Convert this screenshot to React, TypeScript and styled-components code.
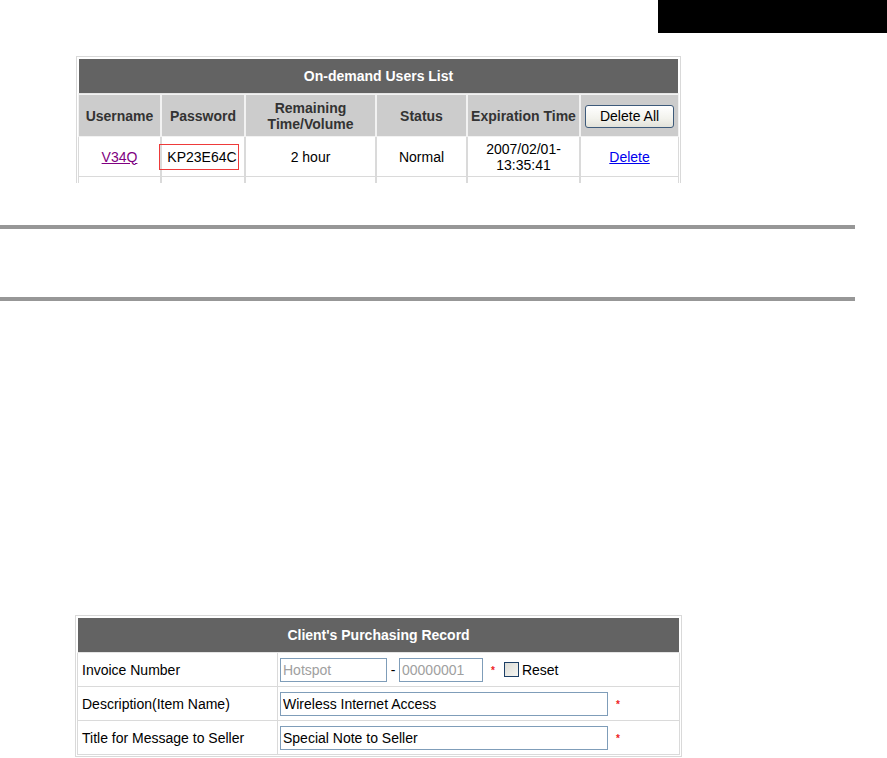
import React from "react";
import styled, { createGlobalStyle } from "styled-components";

const Global = createGlobalStyle`
  html, body { margin: 0; padding: 0; background: #fff; }
  body { font-family: "Liberation Sans", Arial, sans-serif; font-size: 14px; color: #000; }
`;

const Page = styled.div`
  width: 887px;
  height: 758px;
  display: flex;
  flex-direction: column;
  overflow: hidden;
`;

const TopBar = styled.div`
  height: 33px;
  display: flex;
  justify-content: flex-end;
`;

const BlackTab = styled.div`
  width: 229px;
  height: 33px;
  background: #000;
`;

const TableClip = styled.div<{ $top: number; $left: number; $height?: number }>`
  margin-top: ${(p) => p.$top}px;
  margin-left: ${(p) => p.$left}px;
  width: 605px;
  ${(p) => (p.$height ? `height: ${p.$height}px; overflow: hidden;` : "")}
`;

const Table = styled.table`
  width: 605px;
  table-layout: fixed;
  border-collapse: separate;
  border-spacing: 0;
  border: 1px solid #d9d9d9;
  padding: 1px;
  font-family: "Liberation Sans", Arial, sans-serif;
  font-size: 14px;
  box-sizing: border-box;
`;

const TitleCell = styled.th<{ $h: number }>`
  height: ${(p) => p.$h}px;
  background: #636363;
  color: #fff;
  font-weight: bold;
  text-align: center;
  border: 1px solid #fff;
  border-bottom-color: #e4e4e4;
  padding: 0;
`;

const HeadCell = styled.th`
  height: 41px;
  background: #cccccc;
  color: #333;
  font-weight: bold;
  line-height: 16px;
  text-align: center;
  border: 1px solid #f2f2f2;
  padding: 0 2px;
`;

const DataCell = styled.td<{ $h?: number }>`
  height: ${(p) => p.$h ?? 39}px;
  text-align: center;
  line-height: 16px;
  border: 1px solid #dadada;
  border-top: none;
  padding: 0;
  background: #fff;
`;

const UserLink = styled.a<{ $visited?: boolean }>`
  color: ${(p) => (p.$visited ? "#800080" : "#0000ee")};
  text-decoration: underline;
  cursor: pointer;
`;

const Highlight = styled.span`
  display: inline-block;
  border: 1px solid #ee3a3a;
  padding: 4px 1px 4px 7px;
  line-height: 16px;
  margin-left: -8px;
`;

const DeleteAllButton = styled.button`
  width: 89px;
  height: 23px;
  font-family: "Liberation Sans", Arial, sans-serif;
  font-size: 14px;
  color: #000;
  border: 1px solid #3d5a7a;
  border-radius: 3px;
  background: linear-gradient(#ffffff, #f2f2ec 60%, #e2e2da);
  padding: 0;
  margin-top: 1px;
`;

const Rule = styled.div<{ $top: number }>`
  margin-top: ${(p) => p.$top}px;
  width: 855px;
  height: 4px;
  background: #979797;
  flex-shrink: 0;
`;

const LabelCell = styled.td`
  height: 33px;
  padding: 0 0 0 4px;
  border: 1px solid #dadada;
  border-top: none;
  border-right: none;
  text-align: left;
  white-space: nowrap;
`;

const ValueCell = styled.td`
  height: 33px;
  padding: 0 0 0 2px;
  border: 1px solid #dadada;
  border-top: none;
  text-align: left;
`;

const FieldRow = styled.div`
  display: flex;
  align-items: center;
`;

const TextInput = styled.input<{ $w: number; $muted?: boolean }>`
  width: ${(p) => p.$w}px;
  height: 24px;
  box-sizing: border-box;
  border: 1px solid #7f9db9;
  padding: 0 2px;
  font-family: "Liberation Sans", Arial, sans-serif;
  font-size: 14px;
  color: ${(p) => (p.$muted ? "#a0a0a0" : "#000")};
  background: #fff;
  outline: none;
`;

const Dash = styled.span`
  width: 12px;
  text-align: center;
`;

const Required = styled.span`
  color: #ee2222;
  font-size: 10px;
  font-weight: bold;
  margin-left: 8px;
  line-height: 1;
  padding-top: 3px;
`;

const CheckBox = styled.span`
  display: inline-block;
  width: 13px;
  height: 13px;
  margin-left: 9px;
  border: 1px solid #1c3f66;
  background: linear-gradient(135deg, #dcdcd6, #f6f6f2);
`;

const CheckLabel = styled.span`
  margin-left: 3px;
`;

export default function App() {
  return (
    <Page>
      <Global />
      <TopBar>
        <BlackTab />
      </TopBar>

      <TableClip $top={23} $left={76} $height={127}>
        <Table>
          <colgroup>
            <col style={{ width: 83 }} />
            <col style={{ width: 84 }} />
            <col style={{ width: 131 }} />
            <col style={{ width: 91 }} />
            <col style={{ width: 113 }} />
            <col style={{ width: 99 }} />
          </colgroup>
          <thead>
            <tr>
              <TitleCell colSpan={6} $h={34}>On-demand Users List</TitleCell>
            </tr>
            <tr>
              <HeadCell>Username</HeadCell>
              <HeadCell>Password</HeadCell>
              <HeadCell>
                Remaining
                <br />
                Time/Volume
              </HeadCell>
              <HeadCell>Status</HeadCell>
              <HeadCell>Expiration Time</HeadCell>
              <HeadCell>
                <DeleteAllButton>Delete All</DeleteAllButton>
              </HeadCell>
            </tr>
          </thead>
          <tbody>
            <tr>
              <DataCell>
                <UserLink $visited>V34Q</UserLink>
              </DataCell>
              <DataCell>
                <Highlight>KP23E64C</Highlight>
              </DataCell>
              <DataCell>2 hour</DataCell>
              <DataCell>Normal</DataCell>
              <DataCell>
                2007/02/01-
                <br />
                13:35:41
              </DataCell>
              <DataCell>
                <UserLink>Delete</UserLink>
              </DataCell>
            </tr>
            <tr>
              <DataCell />
              <DataCell />
              <DataCell />
              <DataCell />
              <DataCell />
              <DataCell />
            </tr>
          </tbody>
        </Table>
      </TableClip>

      <Rule $top={42} />
      <Rule $top={68} />

      <TableClip $top={314} $left={75}>
        <Table>
          <colgroup>
            <col style={{ width: 200 }} />
            <col style={{ width: 403 }} />
          </colgroup>
          <thead>
            <tr>
              <TitleCell colSpan={2} $h={34}>Client's Purchasing Record</TitleCell>
            </tr>
          </thead>
          <tbody>
            <tr>
              <LabelCell>Invoice Number</LabelCell>
              <ValueCell>
                <FieldRow>
                  <TextInput $w={107} $muted readOnly value="Hotspot" />
                  <Dash>-</Dash>
                  <TextInput $w={84} $muted readOnly value="00000001" />
                  <Required>*</Required>
                  <CheckBox />
                  <CheckLabel>Reset</CheckLabel>
                </FieldRow>
              </ValueCell>
            </tr>
            <tr>
              <LabelCell>Description(Item Name)</LabelCell>
              <ValueCell>
                <FieldRow>
                  <TextInput $w={328} readOnly value="Wireless Internet Access" />
                  <Required>*</Required>
                </FieldRow>
              </ValueCell>
            </tr>
            <tr>
              <LabelCell>Title for Message to Seller</LabelCell>
              <ValueCell>
                <FieldRow>
                  <TextInput $w={328} readOnly value="Special Note to Seller" />
                  <Required>*</Required>
                </FieldRow>
              </ValueCell>
            </tr>
          </tbody>
        </Table>
      </TableClip>
    </Page>
  );
}
